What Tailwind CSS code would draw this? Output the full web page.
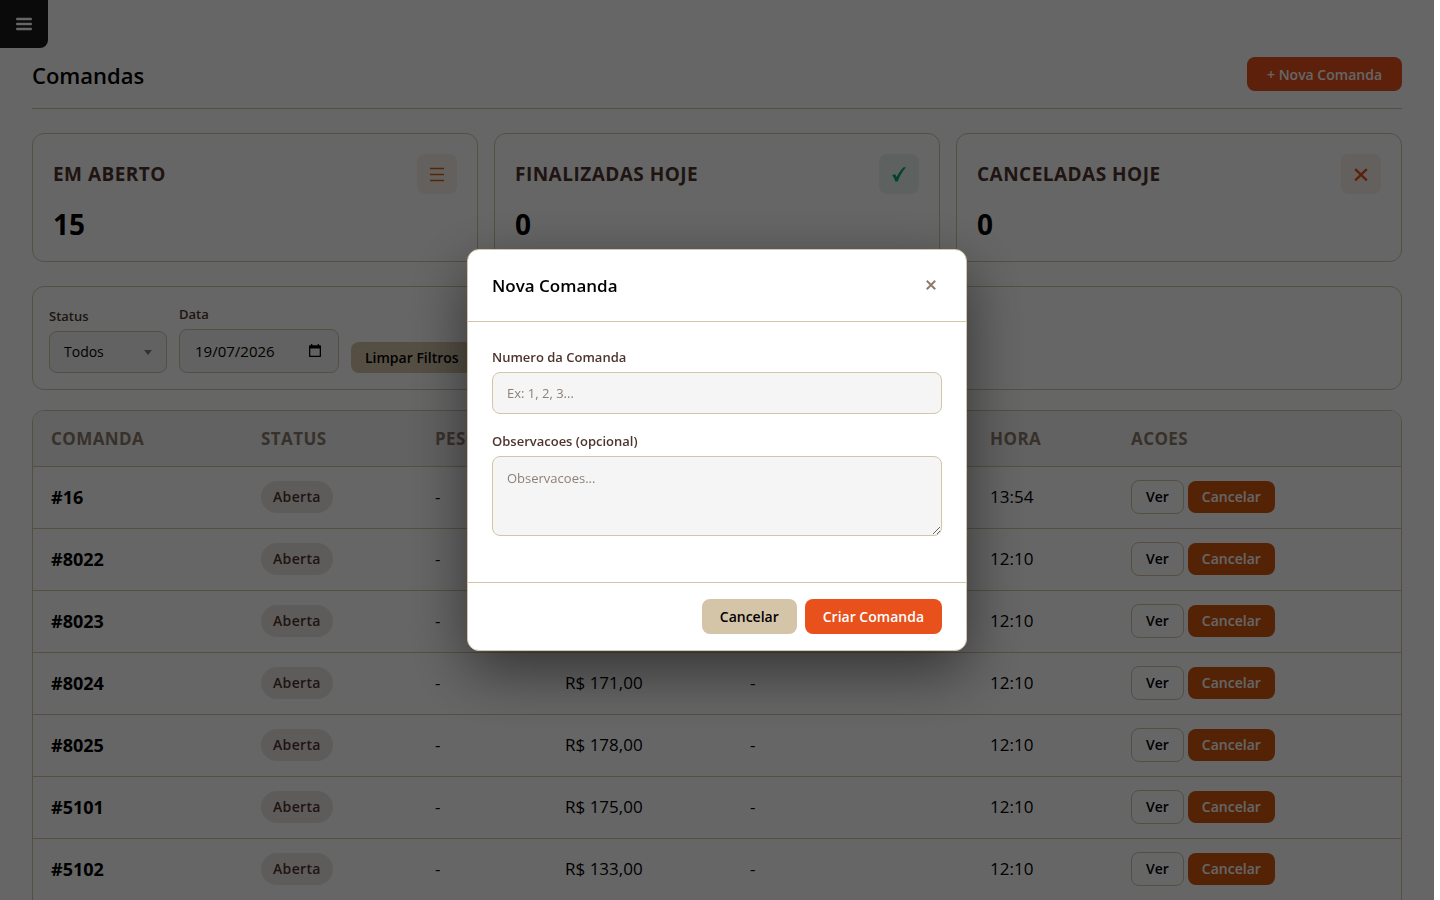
<!DOCTYPE html>
<html lang="pt-BR">
<head>
    <meta charset="UTF-8">
    <meta name="viewport" content="width=device-width, initial-scale=1.0">
    <title>Comandas</title>
    <script src="https://cdn.jsdelivr.net/npm/@tailwindcss/browser@4"></script>
</head>
<body class="h-screen overflow-hidden bg-white pr-[6px] font-['Open_Sans','Noto_Sans',sans-serif] text-black">
    <!-- Menu -->
    <button type="button" aria-label="Abrir menu" class="fixed top-0 left-0 flex size-12 items-center justify-center rounded-br-lg bg-[#1a1a1a] text-white">
        <svg class="h-4 w-4" viewBox="0 0 16 16" fill="none" stroke="currentColor" stroke-width="2.4" stroke-linecap="round">
            <path d="M1.2 3h13.6M1.2 8h13.6M1.2 13h13.6"/>
        </svg>
    </button>

    <main class="px-8 pt-[57px]">
        <header class="mb-6 flex items-start justify-between border-b border-[#d4c5a9] pb-[15px]">
            <h1 class="text-[22px] leading-9 font-semibold">Comandas</h1>
            <button type="button" class="h-[34px] rounded-lg bg-[#e8501c] px-5 pt-px text-sm font-semibold text-white">+ Nova Comanda</button>
        </header>

        <!-- Resumo -->
        <section class="mb-6 grid grid-cols-3 gap-4">
            <article class="rounded-xl border border-[#d4c5a9] p-5 pb-[19px]">
                <div class="flex items-center justify-between">
                    <h2 class="text-[19px] font-bold tracking-wide text-[#4e342e]">EM ABERTO</h2>
                    <span class="flex size-10 items-center justify-center rounded-lg bg-[#f7f0e9] text-[#d2600f]">
                        <svg class="size-5" viewBox="0 0 20 20" fill="none" stroke="currentColor" stroke-width="1.6"><path d="M3 4.500h14M3 10.500h14M3 16.500h14"/></svg>
                    </span>
                </div>
                <p class="mt-3 text-[28px] leading-9 font-bold">15</p>
            </article>
            <article class="rounded-xl border border-[#d4c5a9] p-5 pb-[19px]">
                <div class="flex items-center justify-between">
                    <h2 class="text-[19px] font-bold tracking-wide text-[#4e342e]">FINALIZADAS HOJE</h2>
                    <span class="flex size-10 items-center justify-center rounded-lg bg-[#e8f4f0] text-[#0aa86b]">
                        <svg class="size-5" viewBox="0 0 20 20" fill="currentColor"><path d="M3.200 11.300l2.600-1.300c.8 1 1.300 2 1.800 3C9.500 9.200 12 5.800 14.600 3.200h2.400C13.300 7.500 10.800 12 8.700 17.400H6.300C5.500 15 4.500 13 3.200 11.300z"/></svg>
                    </span>
                </div>
                <p class="mt-3 text-[28px] leading-9 font-bold">0</p>
            </article>
            <article class="rounded-xl border border-[#d4c5a9] p-5 pb-[19px]">
                <div class="flex items-center justify-between">
                    <h2 class="text-[19px] font-bold tracking-wide text-[#4e342e]">CANCELADAS HOJE</h2>
                    <span class="flex size-10 items-center justify-center rounded-lg bg-[#f7efe9] text-[#e8501c]">
                        <svg class="size-5" viewBox="0 0 20 20" fill="none" stroke="currentColor" stroke-width="2.300"><path d="M4.200 5.200l11.600 11.200M15.800 5.200l-11.600 11.200"/></svg>
                    </span>
                </div>
                <p class="mt-3 text-[28px] leading-9 font-bold">0</p>
            </article>
        </section>

        <!-- Filtros -->
        <section class="mb-5 flex h-[104px] items-end gap-3 rounded-xl border border-[#d4c5a9] p-4">
            <div>
                <label for="status" class="mb-[5px] block text-[13px] leading-5 font-semibold text-[#4e342e]">Status</label>
                <div class="relative">
                    <select id="status" class="block h-[42px] w-[118px] appearance-none rounded-lg border border-[#d4c5a9] bg-[#f5f5f5] px-[14px] text-sm">
                        <option>Todos</option>
                        <option>Aberta</option>
                        <option>Finalizada</option>
                        <option>Cancelada</option>
                    </select>
                    <svg class="pointer-events-none absolute top-[19px] right-[15px] h-[5px] w-2" viewBox="0 0 8 5" fill="#8d7b6c"><path d="M0 0h8L4 5z"/></svg>
                </div>
            </div>
            <div>
                <label for="data" class="mb-[5px] block text-[13px] leading-5 font-semibold text-[#4e342e]">Data</label>
                <div class="relative">
                    <input id="data" type="text" value="19/07/2026" class="block h-11 w-40 rounded-lg border border-[#d4c5a9] bg-[#f5f5f5] px-[15px] text-[15px]">
                    <svg class="pointer-events-none absolute top-[15px] right-[18px] h-[13px] w-3" viewBox="0 0 12 13"><path fill-rule="evenodd" d="M2 0h1.300v1.300h5.400V0H10v1.300h1c.6 0 1 .4 1 1V12c0 .6-.4 1-1 1H1c-.6 0-1-.4-1-1V2.300c0-.6.4-1 1-1h1zM1.300 4.500v7.200h9.400V4.500z"/></svg>
                </div>
            </div>
            <button type="button" class="h-[31px] rounded-lg bg-[#d4c5a9] px-[14px] text-sm font-semibold">Limpar Filtros</button>
        </section>

        <!-- Lista de comandas -->
        <div class="overflow-hidden rounded-t-xl border border-[#d4c5a9]">
            <table class="w-full table-fixed text-left text-[17px]">
                <colgroup>
                    <col class="w-[210px]"><col class="w-[174px]"><col class="w-[130px]"><col class="w-[185px]"><col class="w-[240px]"><col class="w-[141px]"><col>
                </colgroup>
                <thead class="bg-[#f5f5f5] tracking-wide text-[#8d7b6c]">
                    <tr class="h-[55px] border-b border-[#d4c5a9]">
                        <th class="px-[18px]">COMANDA</th>
                        <th class="px-[18px]">STATUS</th>
                        <th class="px-[18px]">PESO</th>
                        <th class="px-[18px]">TOTAL</th>
                        <th class="px-[18px]">OBS</th>
                        <th class="px-[18px]">HORA</th>
                        <th class="px-[18px]">ACOES</th>
                    </tr>
                </thead>
                <tbody id="comandas"></tbody>
            </table>
        </div>
    </main>

    <!-- Modal nova comanda -->
    <div class="fixed inset-y-0 right-[6px] left-0 flex items-center justify-center bg-black/60">
        <form role="dialog" aria-labelledby="modalTitulo" class="w-[500px] rounded-xl border border-[#d4c5a9] bg-white shadow-[0_20px_60px_rgba(0,0,0,0.5)]">
            <div class="flex h-[72px] items-center justify-between border-b border-[#d4c5a9] px-6">
                <h2 id="modalTitulo" class="text-[17px] font-semibold">Nova Comanda</h2>
                <button type="button" aria-label="Fechar" class="flex size-[22px] items-center justify-center pb-[2px] text-[#8d7b6c]">
                    <svg class="size-[10px]" viewBox="0 0 10 10" fill="none" stroke="currentColor" stroke-width="2"><path d="M.8.8l8.400 8.400M9.200.8L.8 9.200"/></svg>
                </button>
            </div>
            <div class="px-6 pt-[25px] pb-[46px]">
                <label for="numero" class="mb-[5px] block text-[13px] leading-5 font-semibold text-[#4e342e]">Numero da Comanda</label>
                <input id="numero" type="text" placeholder="Ex: 1, 2, 3..." class="mb-[17px] block h-[42px] w-full rounded-lg border border-[#d4c5a9] bg-[#f5f5f5] px-[14px] text-[13px] placeholder:text-[#8d8178]">
                <label for="obs" class="mb-[5px] block text-[13px] leading-5 font-semibold text-[#4e342e]">Observacoes (opcional)</label>
                <textarea id="obs" placeholder="Observacoes..." class="block h-20 w-full resize-y rounded-lg border border-[#d4c5a9] bg-[#f5f5f5] px-[14px] py-[11px] text-[13px] leading-5 placeholder:text-[#8d8178]"></textarea>
            </div>
            <div class="flex justify-end gap-2 border-t border-[#d4c5a9] px-6 py-4">
                <button type="button" class="h-[35px] rounded-lg bg-[#d4c5a9] px-[18px] text-sm font-semibold">Cancelar</button>
                <button type="submit" class="h-[35px] rounded-lg bg-[#e8501c] px-[18px] text-sm font-semibold text-white">Criar Comanda</button>
            </div>
        </form>
    </div>

    <script>
        const comandas = [
            { numero: 16, total: '-', hora: '13:54' },
            { numero: 8022, total: '-', hora: '12:10' },
            { numero: 8023, total: '-', hora: '12:10' },
            { numero: 8024, total: 'R$ 171,00', hora: '12:10' },
            { numero: 8025, total: 'R$ 178,00', hora: '12:10' },
            { numero: 5101, total: 'R$ 175,00', hora: '12:10' },
            { numero: 5102, total: 'R$ 133,00', hora: '12:10' }
        ];

        document.getElementById('comandas').innerHTML = comandas.map(c => `
            <tr class="h-[62px] border-b border-[#d4c5a9]">
                <td class="px-[18px] text-[18px] font-bold">#${c.numero}</td>
                <td class="px-[18px]"><span class="inline-block rounded-full bg-[#ebe5e1] px-3 text-sm leading-8 font-semibold tracking-wide text-[#4e342e]">Aberta</span></td>
                <td class="px-[18px]">-</td>
                <td class="px-[18px]">${c.total}</td>
                <td class="px-[18px]">-</td>
                <td class="px-[18px]">${c.hora}</td>
                <td class="px-[18px]">
                    <div class="flex items-center gap-1">
                        <button type="button" class="h-[34px] rounded-lg border border-[#d4c5a9] px-[14px] text-sm font-semibold">Ver</button>
                        <button type="button" class="h-8 rounded-lg bg-[#d2570f] px-[14px] text-sm font-semibold text-white">Cancelar</button>
                    </div>
                </td>
            </tr>
        `).join('');
    </script>
</body>
</html>
